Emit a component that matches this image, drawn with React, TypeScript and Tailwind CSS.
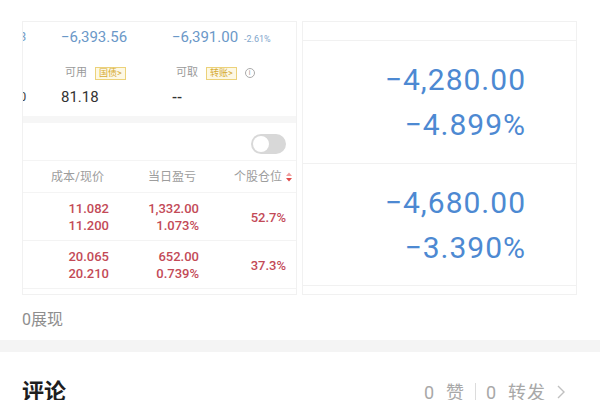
import React from "react";

const FONT = "font-['Roboto','Noto_Sans_CJK_SC',sans-serif]";

function Tag({ text }: { text: string }) {
  return (
    <span className="ml-[8px] inline-flex items-center h-[13px] px-[3px] border border-[#ecd27a] bg-[#fdf8e4] text-[#d6ab35] text-[9px] leading-none">
      {text}
    </span>
  );
}

function Toggle() {
  return (
    <div className="w-[35px] h-[20px] rounded-full bg-[#d8d8d8] p-[2px] flex items-center">
      <div className="w-[16px] h-[16px] rounded-full bg-white" />
    </div>
  );
}

function SortIcon() {
  return (
    <svg width="8" height="12" viewBox="0 0 8 12" className="ml-[3px]">
      <path d="M1 5 L4 1.5 L7 5 Z" fill="#f0a0a0" />
      <path d="M1 7 L4 10.5 L7 7 Z" fill="#e04a4a" />
    </svg>
  );
}

function Row({ a, b, c, d, e, h }: { a: string; b: string; c: string; d: string; e: string; h: string }) {
  return (
    <div className={`flex items-center ${h} border-b border-[#f3f3f3] text-[13px] font-medium text-[#c34a57] leading-[17px]`}>
      <div className="w-[86px] text-right flex flex-col">
        <span>{a}</span>
        <span>{b}</span>
      </div>
      <div className="w-[90px] text-right flex flex-col">
        <span>{c}</span>
        <span>{d}</span>
      </div>
      <div className="w-[87px] text-right pt-[2px]">{e}</div>
    </div>
  );
}

function LeftPanel() {
  return (
    <div className="w-[275px] h-[274px] overflow-hidden border border-[#f1f1f1] flex flex-col">
      <div className="h-[94px] flex flex-col">
        <div className="flex items-center h-[30px]">
          <div className="w-[42px] -ml-[4px] text-[13px] text-[#7aa0c8]">3</div>
          <div className="w-[111px] text-[15px] text-[#6b98c8]">−6,393.56</div>
          <div className="flex items-baseline">
            <span className="text-[15px] text-[#6b98c8]">−6,391.00</span>
            <span className="ml-[6px] text-[9px] text-[#7fa6cc]">-2.61%</span>
          </div>
        </div>
        <div className="flex items-center h-[20px] mt-[11px]">
          <div className="w-[42px]" />
          <div className="w-[111px] flex items-center text-[11px] text-[#9a9a9a]">
            可用<Tag text="国债>" />
          </div>
          <div className="flex items-center text-[11px] text-[#9a9a9a]">
            可取<Tag text="转账>" />
            <span className="ml-[8px] w-[10px] h-[10px] rounded-full border border-[#aaa] text-[7px] leading-[8px] text-center text-[#999]">i</span>
          </div>
        </div>
        <div className="flex items-center h-[24px] mt-[2px]">
          <div className="w-[42px] -ml-[4px] text-[13px] text-[#444]">0</div>
          <div className="w-[111px] text-[15px] text-[#333]">81.18</div>
          <div className="text-[15px] text-[#333] font-medium">--</div>
        </div>
      </div>
      <div className="h-[7px] bg-[#f6f6f6]" />
      <div className="h-[38px] flex items-center justify-end pr-[10px] pt-[4px] border-b border-[#f4f4f4]">
        <Toggle />
      </div>
      <div className="h-[32px] flex items-center text-[12px] text-[#9d9d9d] border-b border-[#f4f4f4]">
        <div className="w-[81px] text-right">成本/现价</div>
        <div className="w-[92px] text-right">当日盈亏</div>
        <div className="w-[97px] flex items-center justify-end">
          个股仓位<SortIcon />
        </div>
      </div>
      <Row a="11.082" b="11.200" c="1,332.00" d="1.073%" e="52.7%" h="h-[48px]" />
      <Row a="20.065" b="20.210" c="652.00" d="0.739%" e="37.3%" h="h-[48px]" />
    </div>
  );
}

function BigCell({ v, p, cls }: { v: string; p: string; cls: string }) {
  return (
    <div className={`${cls} flex flex-col items-end justify-center pr-[50px] text-[30px] leading-[45px] text-[#4d89d2] tracking-[1px]`}>
      <span>{v}</span>
      <span>{p}</span>
    </div>
  );
}

function RightPanel() {
  return (
    <div className="w-[275px] h-[274px] overflow-hidden border border-[#f1f1f1] flex flex-col">
      <div className="h-[19px] border-b border-[#f1f1f1]" />
      <BigCell v="−4,280.00" p="−4.899%" cls="h-[123px] border-b border-[#f1f1f1]" />
      <BigCell v="−4,680.00" p="−3.390%" cls="h-[122px] border-b border-[#f1f1f1]" />
    </div>
  );
}

export default function App() {
  return (
    <div className={`w-[600px] h-[400px] overflow-hidden bg-white ${FONT}`}>
      <div className="flex gap-[5px] pl-[22px] pt-[21px]">
        <LeftPanel />
        <RightPanel />
      </div>
      <div className="pl-[22px] mt-[15px] h-[20px] leading-[20px] text-[16px] text-[#8e8e8e]">0展现</div>
      <div className="h-[12px] bg-[#f4f4f4] mt-[10px]" />
      <div className="flex items-center justify-between pl-[22px] pr-[34px] mt-[26px]">
        <span className="text-[22px] font-semibold text-[#1e1e1e] leading-[28px]">评论</span>
        <span className="flex items-center text-[18px] text-[#a8a8a8]">
          <span className="tracking-[1px]">0&nbsp;&nbsp;赞</span>
          <span className="mx-[10px] w-px h-[18px] bg-[#dcdcdc]" />
          <span className="tracking-[1px]">0&nbsp;&nbsp;转发</span>
          <svg width="10" height="16" viewBox="0 0 10 16" className="ml-[10px]">
            <path d="M2 2 L8 8 L2 14" stroke="#c0c0c0" strokeWidth="1.4" fill="none" />
          </svg>
        </span>
      </div>
    </div>
  );
}
